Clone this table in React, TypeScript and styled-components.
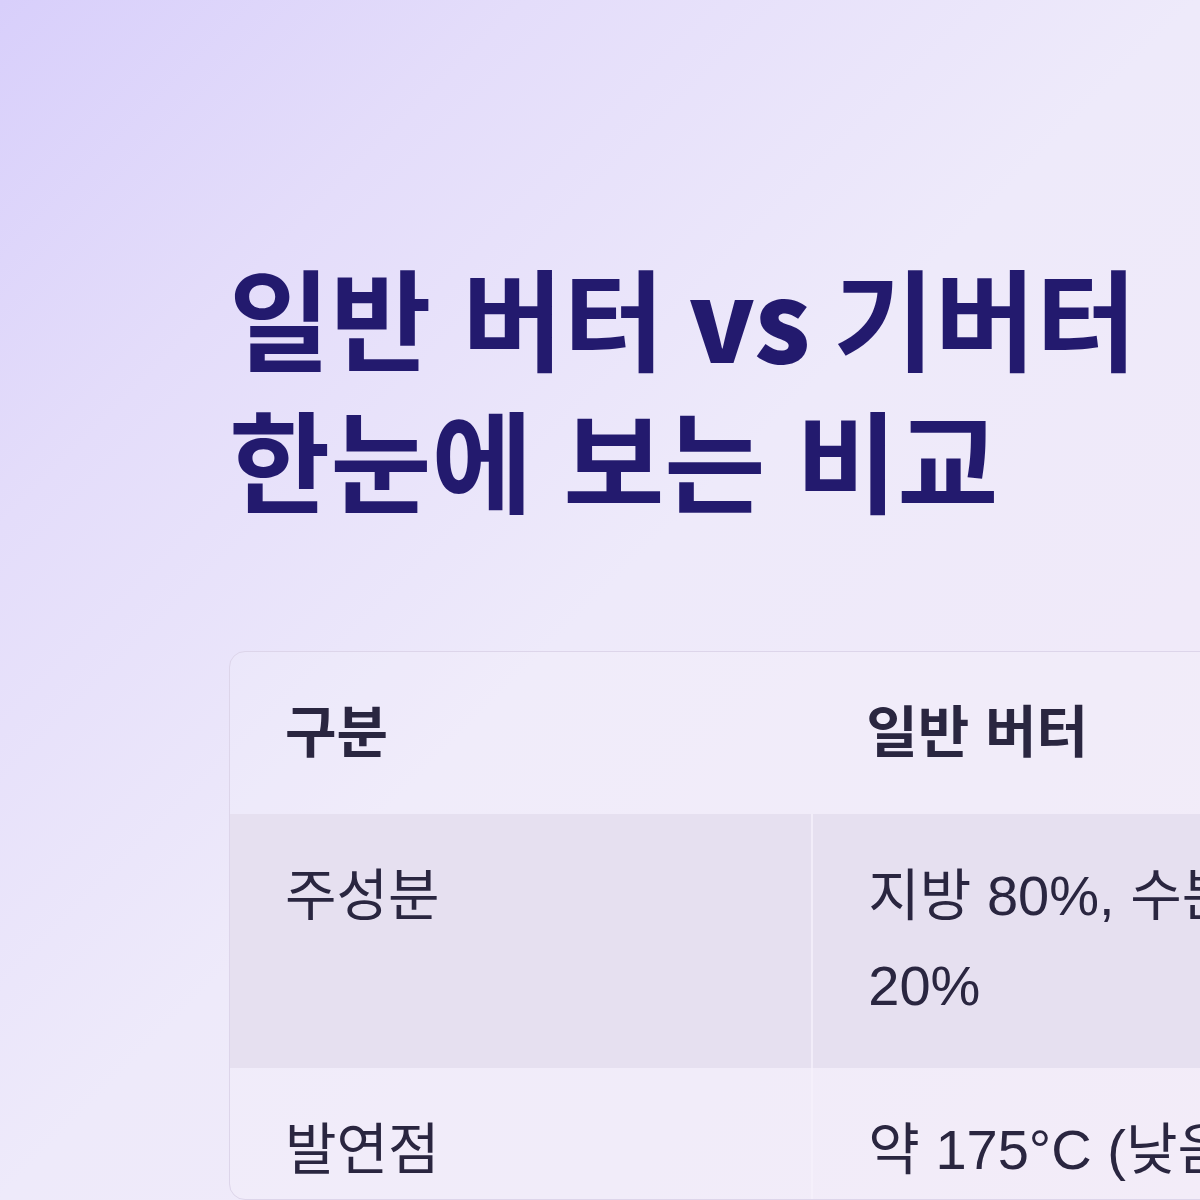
import React from "react";
import styled, { createGlobalStyle } from "styled-components";

const GlobalStyle = createGlobalStyle`
  html, body {
    margin: 0;
    padding: 0;
    width: 1200px;
    height: 1200px;
    overflow: hidden;
  }
  * { box-sizing: border-box; }
`;

const Page = styled.main`
  width: 1200px;
  height: 1200px;
  overflow: hidden;
  background: linear-gradient(135deg, #d8cffb 0%, #e4ddfa 22%, #eeeafa 50%, #f2eaf8 100%);
  padding: 254px 0 0 229px;
  display: flex;
  flex-direction: column;
  font-family: "Liberation Sans", "Noto Sans CJK KR", sans-serif;
`;

const Title = styled.h1`
  margin: 0;
  font-family: "Liberation Sans", "Noto Sans CJK KR", sans-serif;
  font-weight: 700;
  font-size: 110px;
  line-height: 142px;
  letter-spacing: 0;
  color: #231a6e;
  white-space: nowrap;
`;

const TitleLine = styled.span`
  display: block;
`;

const Versus = styled.span`
  font-family: "Noto Sans CJK KR", sans-serif;
  font-weight: 900;
  line-height: 1;
  letter-spacing: -0.01em;
`;

const Card = styled.div`
  margin-top: 113px;
  width: 1746px;
  border: 1px solid #ddd5ea;
  border-radius: 16px;
  overflow: hidden;
  background: rgba(255, 255, 255, 0.12);
`;

const Table = styled.table`
  border-collapse: separate;
  border-spacing: 0;
  width: 100%;
  table-layout: fixed;
`;

const Row = styled.tr<{ $striped?: boolean }>`
  background: ${(p) => (p.$striped ? "#e6e0f0" : "transparent")};
`;

const Th = styled.th`
  width: 581px;
  text-align: left;
  padding: 36px 55px;
  font-size: 56px;
  line-height: 90px;
  font-weight: 700;
  color: #2a2640;
  vertical-align: top;
`;

const Td = styled.td<{ $first?: boolean }>`
  text-align: left;
  padding: 37px 55px;
  font-size: 56px;
  line-height: 90px;
  font-weight: 400;
  color: #2a2640;
  vertical-align: top;
  border-left: ${(p) => (p.$first ? "none" : "2px solid rgba(246, 242, 252, 0.7)")};
`;

const rows = [
  ["주성분", "지방 80%, 수분 20%", "순수 지방 99% 이상"],
  ["발연점", "약 175°C (낮음)", "약 250°C (높음)"],
];

export default function App() {
  return (
    <>
      <GlobalStyle />
      <Page>
        <Title>
          <TitleLine>
            일반 버터<Versus> vs </Versus>기버터
          </TitleLine>
          <TitleLine>한눈에 보는 비교</TitleLine>
        </Title>
        <Card>
          <Table>
            <thead>
              <Row>
                <Th>구분</Th>
                <Th>일반 버터</Th>
                <Th>기버터</Th>
              </Row>
            </thead>
            <tbody>
              {rows.map((r, i) => (
                <Row key={r[0]} $striped={i % 2 === 0}>
                  {r.map((c, j) => (
                    <Td key={j} $first={j === 0}>
                      {c}
                    </Td>
                  ))}
                </Row>
              ))}
            </tbody>
          </Table>
        </Card>
      </Page>
    </>
  );
}
